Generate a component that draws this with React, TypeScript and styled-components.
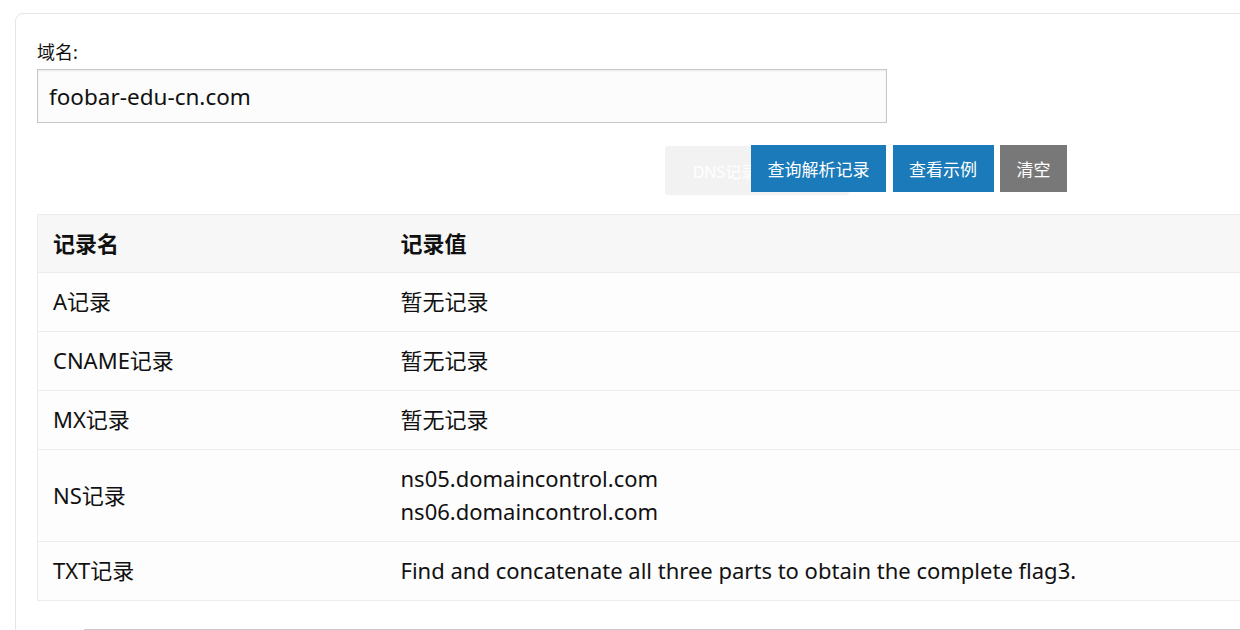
import React from "react";
import styled, { createGlobalStyle } from "styled-components";

const Global = createGlobalStyle`
  html, body {
    margin: 0;
    padding: 0;
    background: #ffffff;
    overflow: hidden;
  }
  body {
    font-family: "Noto Sans", "Noto Sans CJK SC", sans-serif;
    color: #111;
  }
`;

const Page = styled.div`
  padding: 13px 0 0 15px;
  width: 1400px;
`;

const Card = styled.div`
  width: 1300px;
  border: 1px solid #e6e6e6;
  border-radius: 8px;
  background: #fff;
  padding: 26px 21px 0 21px;
  box-sizing: border-box;
  min-height: 700px;
`;

const Label = styled.div`
  font-size: 18px;
  line-height: 24px;
  height: 29px;
  color: #111;
`;

const Input = styled.input`
  display: block;
  width: 850px;
  height: 54px;
  box-sizing: border-box;
  border: 1px solid #c8c8c8;
  background: #fcfcfc;
  box-shadow: inset 0 1px 2px rgba(0, 0, 0, 0.08);
  padding: 0 11px;
  font-family: "Noto Sans", "Noto Sans CJK SC", sans-serif;
  font-size: 22.5px;
  color: #111;
  outline: none;
`;

const ButtonRow = styled.div`
  position: relative;
  display: flex;
  gap: 6.5px;
  padding-left: 714px;
  margin-top: 22px;
  height: 47px;
`;

const Ghost = styled.div`
  position: absolute;
  left: 628px;
  top: 1px;
  width: 184px;
  height: 49px;
  border-radius: 3px;
  background: #f2f2f2;
  color: #fff;
  font-size: 16px;
  display: flex;
  align-items: center;
  justify-content: center;
  z-index: 0;
`;

const Button = styled.button<{ $tone: "blue" | "gray" }>`
  position: relative;
  z-index: 1;
  height: 47px;
  padding: 0 16.5px;
  border: none;
  border-radius: 0;
  background: ${(p) => (p.$tone === "blue" ? "rgba(14, 115, 182, 0.95)" : "#787878")};
  color: #fff;
  font-family: "Noto Sans", "Noto Sans CJK SC", sans-serif;
  font-size: 17px;
  cursor: pointer;
`;

const Table = styled.table`
  margin-top: 22px;
  width: 100%;
  border-collapse: collapse;
  border: 1px solid #ececec;
  font-size: 22px;
`;

const HeadCell = styled.th<{ $w?: number }>`
  text-align: left;
  font-weight: 700;
  background: #f7f7f7;
  padding: 12px 15px;
  line-height: 33px;
  width: ${(p) => (p.$w ? `${p.$w}px` : "auto")};
  box-sizing: border-box;
`;

const Row = styled.tr`
  border-top: 1px solid #ececec;
  background: #fdfdfd;
`;

const Cell = styled.td`
  padding: 12px 15px 13px;
  line-height: 33px;
  vertical-align: middle;
`;

const Line = styled.div`
  line-height: 33px;
`;

const Divider = styled.div`
  margin: 28px 0 0 47px;
  border-top: 2px solid #c8c8c8;
`;

const rows: { name: string; value: string[] }[] = [
  { name: "A记录", value: ["暂无记录"] },
  { name: "CNAME记录", value: ["暂无记录"] },
  { name: "MX记录", value: ["暂无记录"] },
  { name: "NS记录", value: ["ns05.domaincontrol.com", "ns06.domaincontrol.com"] },
  { name: "TXT记录", value: ["Find and concatenate all three parts to obtain the complete flag3."] },
];

export default function App() {
  return (
    <Page>
      <Global />
      <Card>
        <Label>域名:</Label>
        <Input defaultValue="foobar-edu-cn.com" />
        <ButtonRow>
          <Ghost>DNS记录解析说明</Ghost>
          <Button $tone="blue">查询解析记录</Button>
          <Button $tone="blue">查看示例</Button>
          <Button $tone="gray">清空</Button>
        </ButtonRow>
        <Table>
          <thead>
            <tr>
              <HeadCell $w={348}>记录名</HeadCell>
              <HeadCell>记录值</HeadCell>
            </tr>
          </thead>
          <tbody>
            {rows.map((r) => (
              <Row key={r.name}>
                <Cell>{r.name}</Cell>
                <Cell>
                  {r.value.map((v) => (
                    <Line key={v}>{v}</Line>
                  ))}
                </Cell>
              </Row>
            ))}
          </tbody>
        </Table>
        <Divider />
      </Card>
    </Page>
  );
}
